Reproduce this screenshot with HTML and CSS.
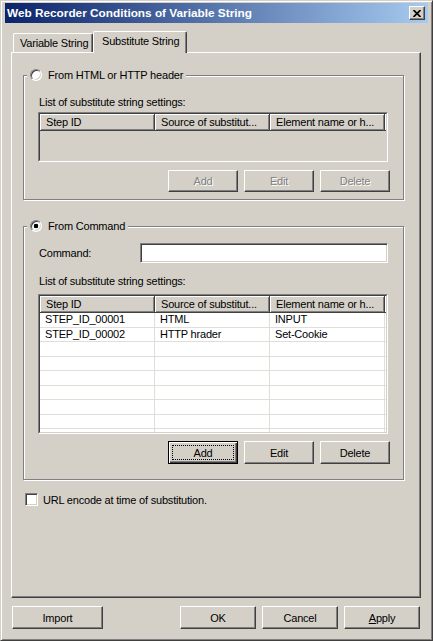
FILE: index.html
```html
<!DOCTYPE html>
<html>
<head>
<meta charset="utf-8">
<link rel="stylesheet" href="styles.css">
</head>
<body>
<div class="window">
  <div class="titlebar">
    <span class="title">Web Recorder Conditions of Variable String</span>
    <button class="close" aria-label="Close"><svg width="8" height="7" viewBox="0 0 8 7"><path d="M0.5 0 L7.5 7 M7.5 0 L0.5 7" stroke="#000" stroke-width="1.7" fill="none"/></svg></button>
  </div>
  <div class="tabs">
    <div class="tab">Variable String</div>
    <div class="tab active">Substitute String</div>
  </div>
  <div class="panel">
    <div class="group g1">
      <div class="legend"><span class="radio"></span><span>From HTML or HTTP header</span></div>
      <div class="label">List of substitute string settings:</div>
      <div class="list small">
        <div class="list-in disabled">
          <div class="hdr"><div class="hc">Step ID</div><div class="hc">Source of substitut...</div><div class="hc">Element name or h...</div><div class="hfill"></div></div>
        </div>
      </div>
      <div class="btns">
        <button class="btn" disabled>Add</button>
        <button class="btn" disabled>Edit</button>
        <button class="btn" disabled>Delete</button>
      </div>
    </div>

    <div class="group g2">
      <div class="legend"><span class="radio checked"></span><span>From Command</span></div>
      <div class="cmd"><span class="cmd-label">Command:</span><span class="input"></span></div>
      <div class="label l2">List of substitute string settings:</div>
      <div class="list big">
        <div class="list-in">
          <div class="hdr"><div class="hc">Step ID</div><div class="hc">Source of substitut...</div><div class="hc">Element name or h...</div><div class="hfill"></div></div>
          <div class="row"><div class="c">STEP_ID_00001</div><div class="c">HTML</div><div class="c">INPUT</div><div class="c"></div></div>
          <div class="row"><div class="c">STEP_ID_00002</div><div class="c">HTTP hrader</div><div class="c">Set-Cookie</div><div class="c"></div></div>
          <div class="row"><div class="c"></div><div class="c"></div><div class="c"></div><div class="c"></div></div>
          <div class="row"><div class="c"></div><div class="c"></div><div class="c"></div><div class="c"></div></div>
          <div class="row"><div class="c"></div><div class="c"></div><div class="c"></div><div class="c"></div></div>
          <div class="row"><div class="c"></div><div class="c"></div><div class="c"></div><div class="c"></div></div>
          <div class="row"><div class="c"></div><div class="c"></div><div class="c"></div><div class="c"></div></div>
          <div class="row"><div class="c"></div><div class="c"></div><div class="c"></div><div class="c"></div></div>
          <div class="row"><div class="c"></div><div class="c"></div><div class="c"></div><div class="c"></div></div>
        </div>
      </div>
      <div class="btns b2">
        <button class="btn focus">Add</button>
        <button class="btn">Edit</button>
        <button class="btn">Delete</button>
      </div>
    </div>

    <div class="check-row"><span class="checkbox"></span><span>URL encode at time of substitution.</span></div>
  </div>
  <div class="footer">
    <button class="btn import">Import</button>
    <div class="right">
      <button class="btn wide">OK</button>
      <button class="btn wide">Cancel</button>
      <button class="btn wide"><u>A</u>pply</button>
    </div>
  </div>
</div>
</body>
</html>
```

FILE: styles.css
```css
body {
  margin: 0;
  background: #fff;
  font-family: "Liberation Sans", Arial, sans-serif;
  font-size: 11px;
  letter-spacing: -0.2px;
  color: #000;
}

.window {
  width: 433px;
  height: 641px;
  box-sizing: border-box;
  background: #d4d0c8;
  border: 1px solid;
  border-color: #d4d0c8 #404040 #404040 #d4d0c8;
  box-shadow: inset 1px 1px #fff, inset -1px -1px #808080;
  padding: 2px 4px 0 4px;
}

.titlebar {
  height: 20px;
  background: linear-gradient(to right, #0a246a, #a6caf0);
  display: flex;
  align-items: center;
  justify-content: space-between;
  padding: 0 3px 0 2px;
}

.title {
  color: #fff;
  font-weight: bold;
  font-size: 11.8px;
  letter-spacing: 0;
  line-height: 20px;
}

.close {
  width: 16px;
  height: 14px;
  padding: 0;
  box-sizing: border-box;
  background: #d4d0c8;
  border: 1px solid;
  border-color: #fff #404040 #404040 #fff;
  box-shadow: inset -1px -1px #808080;
  display: flex;
  align-items: center;
  justify-content: center;
}

.tabs {
  display: flex;
  align-items: flex-end;
  height: 21px;
  margin: 8px 0 0 8px;
}

.tab {
  width: 80px;
  height: 19px;
  box-sizing: border-box;
  padding-left: 6px;
  border-top: 1px solid #fff;
  border-left: 1px solid #fff;
  border-right: 1px solid #404040;
  box-shadow: inset -1px 0 #808080;
  border-radius: 2px 2px 0 0;
  line-height: 18px;
  white-space: nowrap;
}

.tab.active {
  width: 94px;
  height: 22px;
  margin-bottom: -1px;
  padding-left: 8px;
  line-height: 19px;
  background: #d4d0c8;
  position: relative;
  z-index: 1;
}

.panel {
  width: 410px;
  height: 546px;
  margin-left: 6px;
  box-sizing: border-box;
  border: 1px solid;
  border-color: #fff #404040 #404040 #fff;
  box-shadow: inset -1px -1px #808080;
  padding: 22px 0 0 11px;
}

.group {
  width: 381px;
  box-sizing: border-box;
  border: 1px solid #808080;
  box-shadow: inset 1px 1px #fff, 1px 1px #fff;
  position: relative;
}

.g1 {
  padding: 20px 13px 7px 14px;
}

.g2 {
  margin-top: 26px;
  padding: 16px 13px 15px 14px;
}

.legend {
  position: absolute;
  top: -8px;
  left: 3px;
  height: 14px;
  display: flex;
  align-items: center;
  gap: 6px;
  padding: 0 3px;
  background: #d4d0c8;
  white-space: nowrap;
}

.radio {
  width: 12px;
  height: 12px;
  box-sizing: border-box;
  border-radius: 50%;
  border: 1px solid;
  border-color: #808080 #fff #fff #808080;
  background: #fff;
  box-shadow: inset 1px 1px #404040, inset -1px -1px #d4d0c8;
}

.radio.checked {
  background: radial-gradient(circle, #000 0 2px, #fff 2.6px);
}

.label {
  line-height: 13px;
  height: 13px;
  padding-left: 1px;
}

.list {
  width: 350px;
  box-sizing: border-box;
  border: 1px solid;
  border-color: #808080 #fff #fff #808080;
  margin-top: 3px;
}

.list.small { height: 50px; }
.list.big { height: 140px; margin-top: 6px; }

.list-in {
  height: 100%;
  box-sizing: border-box;
  border: 1px solid;
  border-color: #404040 #d4d0c8 #d4d0c8 #404040;
  background: #fff;
  overflow: hidden;
}

.list-in.disabled { background: #d4d0c8; }

.hdr, .row {
  display: grid;
  grid-template-columns: 115px 115px 115px 1fr;
}

.hc, .hfill {
  height: 17px;
  box-sizing: border-box;
  background: #d4d0c8;
  border-right: 1px solid #404040;
  border-bottom: 1px solid #404040;
  box-shadow: inset 1px 1px #fff, inset -1px -1px #808080;
  padding-left: 6px;
  line-height: 16px;
  white-space: nowrap;
  overflow: hidden;
}

.hfill { border-right: 0; padding: 0; }

.c {
  height: 14.5px;
  box-sizing: border-box;
  border-right: 1px solid #e0ded8;
  border-bottom: 1px solid #e0ded8;
  padding-left: 5px;
  line-height: 13px;
  white-space: nowrap;
}

.btns {
  display: flex;
  justify-content: flex-end;
  gap: 6px;
  margin-top: 8px;
  margin-right: 0;
}

.btns.b2 { margin-top: 7px; }

.btn {
  width: 70px;
  height: 22px;
  box-sizing: border-box;
  padding: 0;
  background: #d4d0c8;
  font-family: "Liberation Sans", Arial, sans-serif;
  font-size: 11px;
  letter-spacing: -0.2px;
  color: #000;
  border: 1px solid;
  border-color: #fff #404040 #404040 #fff;
  box-shadow: inset -1px -1px #808080, inset 1px 1px #d4d0c8;
  position: relative;
}

.b2 .btn, .footer .btn { height: 23px; }

.btn:disabled {
  color: #808080;
  text-shadow: 1px 1px #fff;
}

.btn.focus {
  border-color: #000;
  box-shadow: inset 1px 1px #fff, inset -1px -1px #404040, inset -2px -2px #808080;
}

.btn.focus::after {
  content: "";
  position: absolute;
  inset: 3px;
  border: 1px dotted #000;
}

.cmd {
  display: flex;
  align-items: center;
  height: 20px;
}

.cmd-label {
  width: 101px;
  padding-left: 1px;
}

.input {
  width: 248px;
  height: 20px;
  box-sizing: border-box;
  background: #fff;
  border: 1px solid;
  border-color: #808080 #fff #fff #808080;
  box-shadow: inset 1px 1px #404040, inset -1px -1px #d4d0c8;
}

.label.l2 { margin-top: 12px; }

.check-row {
  display: flex;
  align-items: center;
  gap: 5px;
  margin: 13px 0 0 2px;
  height: 13px;
}

.checkbox {
  width: 13px;
  height: 13px;
  box-sizing: border-box;
  background: #fff;
  border: 1px solid;
  border-color: #808080 #fff #fff #808080;
  box-shadow: inset 1px 1px #404040, inset -1px -1px #d4d0c8;
}

.footer {
  display: flex;
  align-items: center;
  margin-top: 8px;
  padding: 0 8px 0 7px;
}

.btn.import { width: 91px; }

.right {
  margin-left: auto;
  display: flex;
  gap: 6px;
}

.btn.wide { width: 76px; }
```
